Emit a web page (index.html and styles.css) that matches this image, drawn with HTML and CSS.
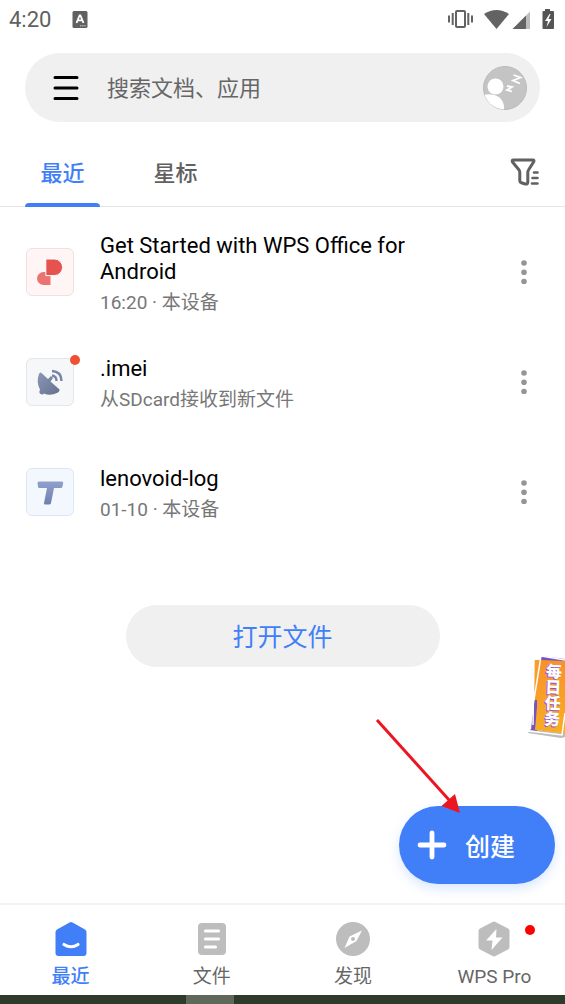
FILE: index.html
```html
<!DOCTYPE html>
<html lang="zh-CN">
<head>
<meta charset="utf-8">
<meta name="viewport" content="width=device-width, initial-scale=1">
<title>WPS Office</title>
<link rel="stylesheet" href="styles.css">
</head>
<body>
<div class="app">
  <header class="status">
    <span class="clock">4:20</span>
    <svg class="ime" viewBox="0 0 16 17" width="16" height="17" aria-hidden="true"><rect x="0.500" y="0" width="15" height="17" rx="1.5" fill="#616161"/><path d="M4.5 12 L7.6 4.5 H8.4 L11.5 12 M5.8 9.4 H10.2" fill="none" stroke="#fff" stroke-width="1.8"/><path d="M8 14.8h6" stroke="#ccc" stroke-width="1" stroke-dasharray="1.5 .6"/></svg>
    <svg class="system" viewBox="0 0 108 22" width="108" height="22" aria-hidden="true">
      <g fill="none" stroke="#636363" stroke-width="2"><rect x="9" y="3" width="9" height="16" rx="1"/><path d="M5.7 5v12M21.3 5v12M2 7.5v7M25 7.5v7"/></g>
      <path d="M37 6 Q49.500 -2 62 6 L49.500 21Z" fill="#636363"/>
      <path d="M65.500 21 L79 7.500 V21Z" fill="#636363"/><path d="M79 7.500 L83 3.500 V21H79Z" fill="#bdbdbd"/>
      <path d="M98 1h5v2h3q1 0 1 1v16q0 1-1 1H96.500q-1 0-1-1V4q0-1 1-1H98Z" fill="#555"/><path d="M102.500 6 L98 13h3l-1.500 6 5-8h-3l2-5Z" fill="#fff"/>
    </svg>
  </header>

  <form class="search" role="search">
    <button class="plain" type="button" aria-label="菜单"><svg viewBox="0 0 26 26" width="26" height="26"><path d="M2 2.500h22M2 13h22M2 23.500h22" stroke="#000" stroke-width="3" stroke-linecap="round"/></svg></button>
    <input class="search-input" type="text" aria-label="搜索" placeholder="搜索文档、应用">
    <button class="plain" type="button" aria-label="账号"><svg viewBox="0 0 44 44" width="44" height="44"><defs><clipPath id="face"><circle cx="22" cy="22" r="21.500"/></clipPath></defs><circle cx="22" cy="22" r="21.500" fill="#c4c4c4" stroke="#bababa"/><g clip-path="url(#face)" fill="#fff"><circle cx="12.500" cy="20.500" r="8"/><path d="M0 29 Q10 27 16 31 Q22 36 21 45 H0Z"/></g><path d="M30.500 9 L37.500 11.500 L30 14.500 L37 17.500M24 20l5 1-5 3 5 1.500" fill="none" stroke="#fff" stroke-width="1.800"/></svg></button>
  </form>

  <nav class="tabs">
    <button class="tab active" type="button">最近</button>
    <button class="tab" type="button">星标</button>
    <button class="plain filter" type="button" aria-label="筛选"><svg viewBox="0 0 30 28" width="30" height="28"><g fill="none" stroke="#616161" stroke-width="3" stroke-linejoin="round" stroke-linecap="round"><path d="M3.500 2H23q1.500 0 .7 1.800L18.500 12q-.7 1-.7 2.500V24q0 2.500-2.500 2l-4-1.300q-1.500-.5-1.500-2V14.500q0-1.500-.7-2.500L2.500 4Q1.500 2 3.500 2Z"/><path d="M24 14.500h3.500M22.500 20h5M22 25.500h5.500" stroke-width="2.600"/></g></svg></button>
  </nav>

  <main class="content">
    <ul class="files">
      <li class="file">
        <span class="thumb red"><svg viewBox="0 0 46 46" width="46" height="46"><path d="M23.500 23v13h-7a6.500 6.500 0 0 1 0-13Z" fill="#ea7471"/><path d="M18.800 10h8.500a8.300 8.300 0 0 1 0 16.600H18.800Z" fill="#e6534f" stroke="#fff" stroke-width="1"/></svg></span>
        <span class="info"><span class="name">Get Started with WPS Office for Android</span><span class="meta">16:20 · 本设备</span></span>
        <button class="plain more" type="button" aria-label="更多"><svg viewBox="0 0 6 24" width="6" height="24" fill="#959595"><circle cx="3" cy="3" r="2.800"/><circle cx="3" cy="12.300" r="2.800"/><circle cx="3" cy="21.500" r="2.800"/></svg></button>
      </li>
      <li class="file">
        <span class="thumb gray"><svg viewBox="0 0 46 46" width="46" height="46"><defs><linearGradient id="slate" x2="1" y2="1"><stop stop-color="#8a97b5"/><stop offset="1" stop-color="#65728f"/></linearGradient></defs><path d="M14.500 14 L21 20 L24 17 L26 19 L23.500 22.500 L32.500 30.500 Q33 32 31 33.500 Q23 37.500 17 34.500 Q16 36 13.500 35 Q11.500 34 13 30.500 Q9 23 12 15 Q13 12.500 14.500 14Z" fill="url(#slate)"/><path d="M25 16.500 Q29.500 17 29.500 22M25 12 Q34.500 12.500 34.500 22" fill="none" stroke="#7886a5" stroke-width="2.400"/></svg><i class="dot"></i></span>
        <span class="info"><span class="name">.imei</span><span class="meta">从SDcard接收到新文件</span></span>
        <button class="plain more" type="button" aria-label="更多"><svg viewBox="0 0 6 24" width="6" height="24" fill="#959595"><circle cx="3" cy="3" r="2.800"/><circle cx="3" cy="12.300" r="2.800"/><circle cx="3" cy="21.500" r="2.800"/></svg></button>
      </li>
      <li class="file">
        <span class="thumb blue"><svg viewBox="0 0 46 46" width="46" height="46"><defs><linearGradient id="steel" x2="0" y2="1"><stop stop-color="#91a1cd"/><stop offset="1" stop-color="#6f80ad"/></linearGradient></defs><path d="M12 12.500H35q1.500 0 1.200 1.500l-.7 3.500q-.3 1.500-1.800 1.500H27l-3 15q-.3 1.500-1.800 1.500h-4q-1.500 0-1.200-1.500L20 19h-7.500q-1.500 0-1.500-1.500l-.500-3.500q0-1.500 1.500-1.500Z" fill="url(#steel)"/></svg></span>
        <span class="info"><span class="name">lenovoid-log</span><span class="meta">01-10 · 本设备</span></span>
        <button class="plain more" type="button" aria-label="更多"><svg viewBox="0 0 6 24" width="6" height="24" fill="#959595"><circle cx="3" cy="3" r="2.800"/><circle cx="3" cy="12.300" r="2.800"/><circle cx="3" cy="21.500" r="2.800"/></svg></button>
      </li>
    </ul>
    <button class="open" type="button">打开文件</button>
  </main>

  <nav class="bottom">
    <a class="item current" href="#recent"><svg viewBox="0 0 34 36" width="34" height="36"><path d="M15.500 1.500q1.500-1 3 0L31 8.500q1.500 1 1.500 2.500V32q0 3-3 3h-25q-3 0-3-3V11q0-1.500 1.500-2.500Z" fill="#417ff9"/><path d="M10 23.500Q17 28 24 23.500" fill="none" stroke="#fff" stroke-width="3.200" stroke-linecap="round"/></svg><span>最近</span></a>
    <a class="item" href="#files"><svg viewBox="0 0 34 36" width="34" height="36"><rect x="3" y="2" width="28" height="32" rx="4" fill="#bdbdbd"/><path d="M10.500 10h13M10.500 18h13M10.500 26h10" stroke="#fff" stroke-width="3.200" stroke-linecap="round"/></svg><span>文件</span></a>
    <a class="item" href="#discover"><svg viewBox="0 0 34 36" width="34" height="36"><circle cx="17" cy="18" r="17" fill="#bdbdbd"/><path d="M26 9.500 L20.500 20 L8.500 27 L13.500 15.500Z" fill="#fff"/><circle cx="17" cy="18" r="2" fill="#bdbdbd"/></svg><span>发现</span></a>
    <a class="item" href="#pro"><svg viewBox="0 0 34 36" width="34" height="36"><path d="M15.500 1q1.500-.8 3 0L31 7.500q1.500.8 1.500 2.500v16q0 1.700-1.500 2.500L18.500 35q-1.500.8-3 0L3 28.500Q1.500 27.700 1.500 26V10q0-1.700 1.500-2.500Z" fill="#bdbdbd"/><path d="M19.500 8 L9 19.500h6.500L14.500 29 L25.500 16.500H19Z" fill="#fff"/></svg><span>WPS Pro</span><i class="notice"></i></a>
  </nav>
  <div class="strip"><span class="strip-tile"></span></div>

  <button class="task" type="button">
    <svg class="task-art" viewBox="0 0 38 84" width="38" height="84" aria-hidden="true"><defs><linearGradient id="amber" x2="0" y2="1"><stop stop-color="#f8912c"/><stop offset="1" stop-color="#f9ae22"/></linearGradient></defs><path d="M1 78 L34 83 L38 82 V78 L3 74Z" fill="#bbb"/><path d="M7 5 H38 V78 L7 74Z" fill="#f99c2b"/><path d="M14 1 L38 4 V20 H14ZM7 45L4 75l6 1V45Z" fill="#7654bd"/><path d="M14 5 L38 6 V79 L34 78 L8 75Z" fill="url(#amber)"/><path d="M38 5 L14 1 L2 76 L35 80 L38 58M7 5 L6 70" fill="none" stroke="#fff" stroke-width="1.500"/></svg>
    <span class="task-text">每日任务</span>
  </button>
  <button class="create" type="button"><svg viewBox="0 0 30 30" width="30" height="30"><path d="M15 3v24M3 15h24" stroke="#fff" stroke-width="4.800" stroke-linecap="round"/></svg><span>创建</span></button>
  <svg class="arrow" viewBox="0 0 86 96" width="86" height="96" aria-hidden="true"><path d="M2 2 L75 83" stroke="#ec1620" stroke-width="3"/><path d="M85 95 L66.500 88 L80 76Z" fill="#ec1620"/></svg>
</div>
</body>
</html>
```
FILE: styles.css
```css
* { box-sizing: border-box; }
body {
  margin: 0;
  background: #fff;
  font-family: Roboto, "Noto Sans CJK SC", sans-serif;
  color: #616161;
}
button, input {
  margin: 0;
  padding: 0;
  border: 0;
  background: none;
  font: inherit;
  color: inherit;
}
svg { display: block; flex: none; }
.app {
  position: relative;
  display: flex;
  flex-direction: column;
  min-height: 100vh;
  overflow: hidden;
}
.plain { display: flex; align-items: center; justify-content: center; flex: none; }

.status {
  display: flex;
  align-items: center;
  height: 38px;
  padding: 0 10px 0 9px;
}
.clock { padding-top: 2px; font-size: 22px; line-height: 26px; }
.ime { margin-left: 21px; }
.system { margin-left: auto; }

.search {
  display: flex;
  align-items: center;
  height: 69px;
  margin: 15px 25px 0;
  padding: 0 13px 0 28px;
  border-radius: 35px;
  background: #f0f0f0;
}
.search-input {
  flex: 1;
  min-width: 0;
  height: 40px;
  margin-left: 28px;
  padding-top: 2px;
  font-size: 22px;
}
.search-input::placeholder { color: #666; opacity: 1; }

.tabs {
  display: flex;
  height: 85px;
  padding: 0 25px;
  border-bottom: 1px solid #e6e6e6;
}
.tab {
  position: relative;
  width: 75px;
  margin-right: 38px;
  padding-top: 14px;
  font-size: 22px;
  font-weight: 500;
}
.active { color: #417ff9; }
.active::after {
  content: "";
  position: absolute;
  left: 0;
  right: 0;
  bottom: -1px;
  height: 4px;
  border-radius: 4px 4px 0 0;
  background: #417ff9;
}
.filter { margin-left: auto; padding-top: 16px; }

.content {
  display: flex;
  flex: 1;
  flex-direction: column;
  align-items: center;
}
.files {
  align-self: stretch;
  margin: 0;
  padding: 10px 29px 0 26px;
  list-style: none;
}
.file { display: flex; align-items: center; height: 110px; }
.thumb {
  position: relative;
  flex: none;
  width: 48px;
  height: 48px;
  border: 1px solid #e4e6ea;
  border-radius: 6px;
}
.red { background: #fff5f4; border-color: #f0e0e0; }
.gray { background: #f6f7f8; }
.blue { background: #f3f8ff; border-color: #dfe6f2; }
.dot {
  position: absolute;
  top: -4px;
  right: -7px;
  width: 10px;
  height: 10px;
  border-radius: 50%;
  background: #ee5033;
}
.info {
  display: flex;
  flex: 1;
  flex-direction: column;
  gap: 6px;
  max-width: 340px;
  margin-left: 26px;
  padding-top: 3px;
}
.name { font-size: 22px; line-height: 26px; color: #000; }
.meta { font-size: 19px; line-height: 24px; color: #777; }
.more { width: 24px; height: 48px; margin-left: auto; }

.open {
  width: 314px;
  max-width: 90%;
  height: 62px;
  margin-top: 58px;
  padding-bottom: 2px;
  border-radius: 31px;
  background: #f0f0f0;
  font-size: 25px;
  color: #417ff9;
}

.bottom {
  display: flex;
  height: 92px;
  border-top: 2px solid #f3f3f3;
}
.item {
  position: relative;
  display: flex;
  flex: 1;
  flex-direction: column;
  align-items: center;
  gap: 7px;
  padding-top: 16px;
  font-size: 19px;
  line-height: 26px;
  color: #666;
  text-decoration: none;
}
.current { color: #417ff9; font-weight: 500; }
.notice {
  position: absolute;
  top: 20px;
  right: 30px;
  width: 10px;
  height: 10px;
  border-radius: 50%;
  background: #f00;
}
.strip { display: flex; height: 9px; padding-left: 33%; background: #2f3b2a; }
.strip-tile { width: 48px; background: #5f6859; }

.task {
  position: absolute;
  right: 0;
  bottom: 265px;
  width: 38px;
  height: 84px;
}
.task-art { position: absolute; inset: 0; }
.task-text {
  position: absolute;
  top: 8px;
  right: 6px;
  font-size: 16px;
  font-weight: 900;
  line-height: 16px;
  writing-mode: vertical-rl;
  color: #fff;
  text-shadow: -1px 1px 0 #8a4fd8;
  transform: rotate(2deg);
}
.create {
  position: absolute;
  right: 10px;
  bottom: 120px;
  display: flex;
  align-items: center;
  gap: 18px;
  width: 156px;
  height: 78px;
  padding-left: 18px;
  border-radius: 39px;
  background: #417ff9;
  box-shadow: 0 5px 12px #417ff930;
  font-size: 25px;
  font-weight: 500;
  color: #fff;
}
.arrow { position: absolute; right: 104px; bottom: 190px; }
```
